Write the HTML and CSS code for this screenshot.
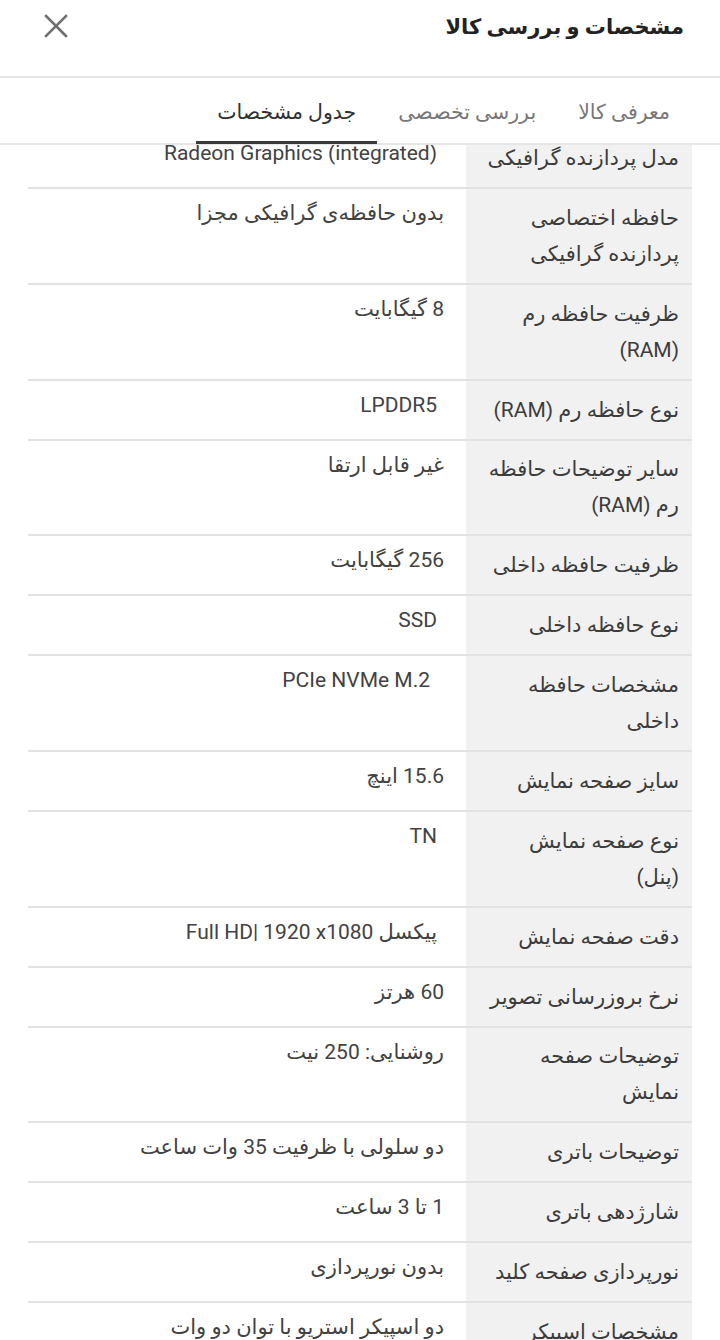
FILE: index.html
```html
<!DOCTYPE html>
<html lang="fa" dir="rtl">
<head>
<meta charset="utf-8">
<link rel="stylesheet" href="styles.css">
</head>
<body>
<div class="sheet">
  <header class="top">
    <h1 class="title">مشخصات و بررسی کالا</h1>
    <button class="close" aria-label="بستن">
      <svg width="24" height="24" viewBox="0 0 24 24"><path d="M2 2 L22 22 M22 2 L2 22" stroke="#6f6f6f" stroke-width="2.6" stroke-linecap="square" fill="none"/></svg>
    </button>
  </header>
  <nav class="tabs">
    <span class="tab">معرفی کالا</span>
    <span class="tab">بررسی تخصصی</span>
    <span class="tab active">جدول مشخصات</span>
  </nav>
  <div class="viewport">
    <div class="specs">
      <div class="row"><div class="k">مدل پردازنده گرافیکی</div><div class="v lat">Radeon Graphics (integrated)</div></div>
      <div class="row"><div class="k">حافظه اختصاصی<br>پردازنده گرافیکی</div><div class="v">بدون حافظه‌ی گرافیکی مجزا</div></div>
      <div class="row"><div class="k">ظرفیت حافظه رم<br>(RAM)</div><div class="v">8 گیگابایت</div></div>
      <div class="row"><div class="k">نوع حافظه رم (RAM)</div><div class="v lat">LPDDR5</div></div>
      <div class="row"><div class="k">سایر توضیحات حافظه<br>رم (RAM)</div><div class="v">غیر قابل ارتقا</div></div>
      <div class="row"><div class="k">ظرفیت حافظه داخلی</div><div class="v">256 گیگابایت</div></div>
      <div class="row"><div class="k">نوع حافظه داخلی</div><div class="v lat">SSD</div></div>
      <div class="row"><div class="k">مشخصات حافظه<br>داخلی</div><div class="v lat wide">PCIe NVMe M.2</div></div>
      <div class="row"><div class="k">سایز صفحه نمایش</div><div class="v">15.6 اینچ</div></div>
      <div class="row"><div class="k">نوع صفحه نمایش<br>(پنل)</div><div class="v lat">TN</div></div>
      <div class="row"><div class="k">دقت صفحه نمایش</div><div class="v lat">پیکسل <span dir="ltr">Full HD| 1920 x1080</span></div></div>
      <div class="row"><div class="k">نرخ بروزرسانی تصویر</div><div class="v">60 هرتز</div></div>
      <div class="row"><div class="k">توضیحات صفحه<br>نمایش</div><div class="v">روشنایی: 250 نیت</div></div>
      <div class="row"><div class="k">توضیحات باتری</div><div class="v">دو سلولی با ظرفیت 35 وات ساعت</div></div>
      <div class="row"><div class="k">شارژدهی باتری</div><div class="v">1 تا 3 ساعت</div></div>
      <div class="row"><div class="k">نورپردازی صفحه کلید</div><div class="v">بدون نورپردازی</div></div>
      <div class="row"><div class="k">مشخصات اسپیکر</div><div class="v">دو اسپیکر استریو با توان دو وات</div></div>
    </div>
  </div>
</div>
</body>
</html>
```

FILE: styles.css
```css
* { box-sizing: border-box; }
html, body { margin: 0; padding: 0; background: #ffffff; }
body {
  font-family: Roboto, "DejaVu Sans", sans-serif;
  color: #424242;
  width: 720px;
  height: 1340px;
  overflow: hidden;
}
.sheet { display: flex; flex-direction: column; height: 1340px; }
.top {
  height: 78px;
  flex: none;
  border-bottom: 2px solid #e6e6e6;
  display: flex;
  align-items: flex-start;
  justify-content: space-between;
  padding: 9px 36px 0 44px;
}
.title {
  margin: 0;
  font-size: 21px;
  font-weight: 700;
  color: #222222;
  line-height: 36px;
}
.close {
  border: 0;
  background: none;
  padding: 0;
  margin-top: 5px;
  width: 24px;
  height: 24px;
  display: flex;
}
.tabs {
  height: 67px;
  flex: none;
  border-bottom: 2px solid #e6e6e6;
  display: flex;
  justify-content: flex-start;
  align-items: stretch;
  padding-right: 29px;
}
.tab {
  font-size: 20.5px;
  color: #777777;
  padding: 2px 21px 0;
  display: flex;
  align-items: center;
}
.tab.active {
  color: #303030;
  box-shadow: inset 0 -3px 0 #3a3a3a;
  margin-bottom: -1px;
}
.viewport { flex: 1; overflow: hidden; padding: 0 28px; }
.specs { margin-top: -16px; }
.row {
  display: flex;
  border-bottom: 2px solid #e2e2e2;
}
.k {
  width: 226px;
  flex: none;
  background: #f1f1f1;
  padding: 10.95px 13px 10.95px 6px;
  font-size: 21px;
  line-height: 36px;
  color: #3c3c3c;
}
.v {
  flex: 1;
  padding: 6px 22px 6px 10px;
  font-size: 21px;
  line-height: 36px;
  color: #424242;
}
.v.lat { padding-right: 29px; }
.v.lat.wide { padding-right: 36px; }
```
